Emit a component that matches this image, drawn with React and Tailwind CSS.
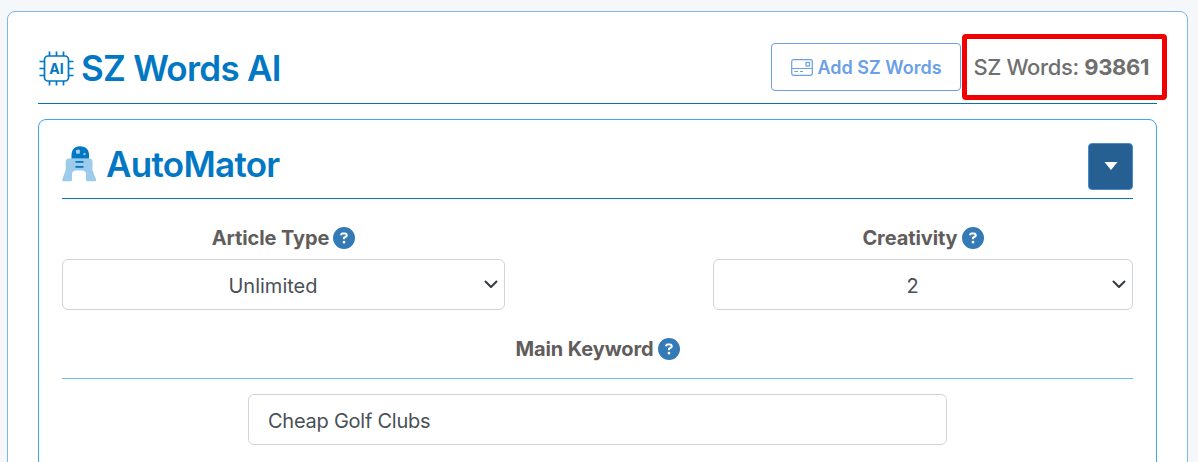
import React from "react";
import { FaCircleQuestion } from "react-icons/fa6";

function Help() {
  return <FaCircleQuestion className="w-[22px] h-[22px] text-[#337ab7] ml-[4px] shrink-0" />;
}

function ChipIcon() {
  return (
    <svg width="37" height="37" viewBox="0 0 37 37" fill="none" stroke="#0277c4" strokeWidth="1.7" className="shrink-0">
      <rect x="6.5" y="6" width="24" height="25" rx="3.5" />
      <path d="M11.5 1.5V6M18.5 1.5V6M25.5 1.5V6M11.5 31V35.5M18.5 31V35.5M25.5 31V35.5M1.5 11.5H6.5M1.5 18.5H6.5M1.5 25.5H6.5M30.5 11.5H35.5M30.5 18.5H35.5M30.5 25.5H35.5" />
      <text x="18.5" y="24" textAnchor="middle" fontSize="14" fontWeight="700" fill="#0277c4" stroke="none" fontFamily="Inter, sans-serif">AI</text>
    </svg>
  );
}

function RobotIcon() {
  return (
    <svg width="35" height="36" viewBox="0 0 35 36" className="shrink-0">
      <path d="M7 12.500H27.500C29.500 12.500 30.500 14 30.500 16V24L34 33.500C34.300 34.500 33.800 35.300 33 35.300H25.500C24.500 35.300 24 34.500 24 33.500V28Q24 24.500 20 24.500H14Q10 24.500 10 28V33.500C10 34.500 9.500 35.300 8.500 35.300H1.500C0.500 35.300 0 34.500 0.300 33.500L3.700 24V16C3.700 14 5 12.500 7 12.500Z" fill="#9ccbec" />
      <path d="M9.500 12.500V9C9.500 3.500 13 0.300 18 0.300C23.500 0.300 27 3.500 27 9V12.500Z" fill="#0277c4" />
      <circle cx="16" cy="5.800" r="2.200" fill="#9ccbec" />
      <circle cx="22.500" cy="8" r="1.200" fill="#9ccbec" />
      <rect x="13.500" y="15" width="8" height="1.800" fill="#0277c4" />
      <rect x="13.500" y="20" width="8" height="1.800" fill="#0277c4" />
    </svg>
  );
}

function CardIcon() {
  return (
    <svg width="22" height="17" viewBox="0 0 22 17" fill="none" stroke="#6b9fe8" strokeWidth="1.200" className="shrink-0">
      <rect x="0.700" y="0.700" width="20.600" height="15.600" rx="2" />
      <rect x="15" y="3.500" width="3.500" height="3.500" />
      <path d="M0.700 9.500H21.300M3.500 12.500H7M9 12.500H12" />
    </svg>
  );
}

function Select({ value }) {
  return (
    <div className="relative w-full">
      <select
        defaultValue={value}
        className="w-full h-[51px] appearance-none bg-white border border-[#ced4da] rounded-md pr-[21px] pt-[3px] text-center text-[20px] text-[#495057] outline-none"
      >
        <option>{value}</option>
      </select>
      <svg width="16" height="16" viewBox="0 0 16 16" fill="none" stroke="#343a40" strokeWidth="2" strokeLinecap="round" strokeLinejoin="round" className="absolute right-[6px] top-[17px] pointer-events-none">
        <path d="M2.500 5.500l5.500 5.500 5.500-5.500" />
      </svg>
    </div>
  );
}

function Label({ children, className = "" }) {
  return (
    <div className={`flex items-center justify-center font-bold text-[20px] tracking-[-0.1px] text-[#605d5c] leading-[24px] ${className}`}>
      {children}
      <Help />
    </div>
  );
}

export default function App() {
  return (
    <div className="h-screen overflow-hidden bg-[#f5f7fb] pt-[11px] pl-[7px] pr-[10px] font-['Inter','Liberation_Sans',sans-serif]">
      <div className="bg-white border border-[#7db8e8] rounded-lg px-[30px] h-[600px]">
        <div className="flex items-center justify-between h-[92px] border-b border-[#0b6fb0]">
          <div className="flex items-center gap-[6px] pt-[21px]">
            <ChipIcon />
            <h1 className="font-semibold text-[35px] leading-[40px] text-[#0277c4] tracking-[-0.75px]">SZ Words AI</h1>
          </div>
          <div className="flex items-center pt-[18px]">
            <button className="flex items-center justify-center gap-[4px] w-[190px] h-[48px] pt-[2px] bg-white border border-[#6b9fe8] rounded text-[#6b9fe8] font-semibold text-[18px]">
              <CardIcon />
              Add SZ Words
            </button>
            <div className="relative ml-[12px] mr-[8px] font-medium text-[#6f6f6f] text-[22px] tracking-[-0.37px] leading-[28px]">
              SZ Words: <span className="font-bold">93861</span>
              <div className="absolute -left-[11px] -right-[18px] -top-[19px] -bottom-[19px] border-[5px] border-[#f00000] rounded-sm" />
            </div>
          </div>
        </div>

        <div className="mt-[15px] border border-[#42a5f5] rounded-lg px-[23px] h-[500px]">
          <div className="flex items-center justify-between h-[79px] border-b border-[#0277c4] pt-[10px]">
            <div className="flex items-center gap-[9px]">
              <RobotIcon />
              <h2 className="font-semibold text-[35px] leading-[40px] text-[#0277c4] tracking-[-0.7px]">AutoMator</h2>
            </div>
            <button className="flex items-center justify-center w-[45px] h-[47px] mt-[4px] bg-[#265f92] border border-[#4a8ad0] rounded">
              <svg width="14" height="8" viewBox="0 0 14 8"><path d="M0.500 0H13.500L7 8Z" fill="#fff" /></svg>
            </button>
          </div>

          <div className="flex justify-between mt-[27px]">
            <div className="w-[443px]">
              <Label>Article Type</Label>
              <div className="mt-[9px]"><Select value="Unlimited" /></div>
            </div>
            <div className="w-[420px]">
              <Label>Creativity</Label>
              <div className="mt-[9px]"><Select value="2" /></div>
            </div>
          </div>

          <Label className="mt-[27px]">Main Keyword</Label>
          <div className="mt-[17px] border-t border-[#6dbbed]" />
          <div className="flex justify-center mt-[15px]">
            <input
              readOnly
              value="Cheap Golf Clubs"
              className="w-[699px] h-[51px] px-[19px] pt-[3px] bg-white border border-[#ced4da] rounded-md text-[20px] tracking-[-0.25px] text-[#495057] outline-none"
            />
          </div>
        </div>
      </div>
    </div>
  );
}
